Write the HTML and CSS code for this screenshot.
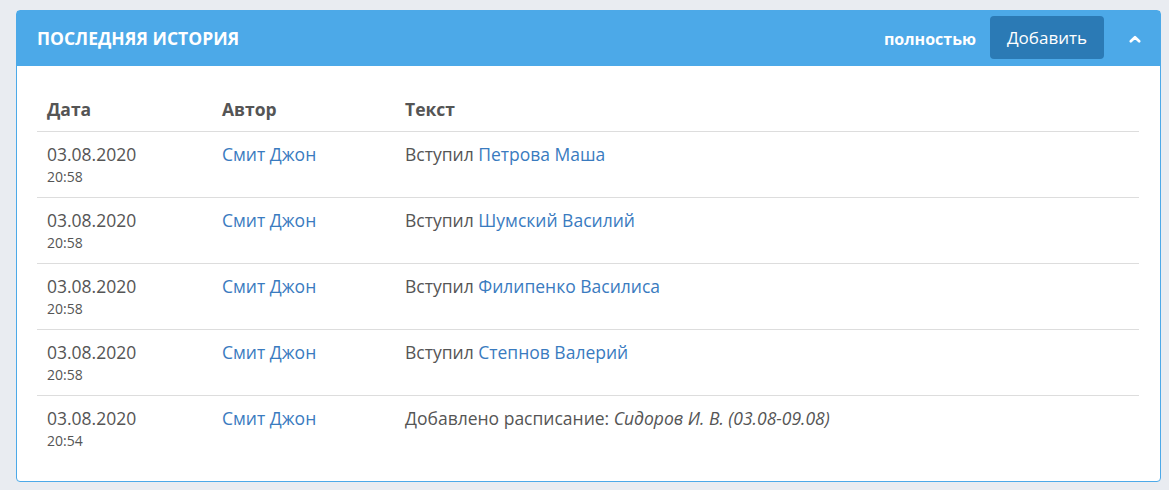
FILE: index.html
```html
<!DOCTYPE html>
<html lang="ru">
<head>
    <meta charset="UTF-8">
    <title>Последняя история</title>
    <link rel="stylesheet" href="styles.css">
</head>
<body>
    <div class="panel">
        <div class="panel-heading">
            <h2 class="panel-title">Последняя история</h2>
            <div class="panel-tools">
                <a href="#" class="full-link">полностью</a>
                <button class="btn-add">Добавить</button>
                <a href="#" class="collapse">
                    <svg width="12" height="8" viewBox="0 0 12 8"><path d="M1.8 6.3 L6 2.2 L10.2 6.3" fill="none" stroke="#fff" stroke-width="2.6" stroke-linecap="round" stroke-linejoin="round"/></svg>
                </a>
            </div>
        </div>
        <div class="panel-body">
            <table class="history">
                <thead>
                    <tr>
                        <th class="col-date">Дата</th>
                        <th class="col-author">Автор</th>
                        <th>Текст</th>
                    </tr>
                </thead>
                <tbody>
                    <tr>
                        <td>03.08.2020<div class="time">20:58</div></td>
                        <td><a href="#">Смит Джон</a></td>
                        <td>Вступил <a href="#">Петрова Маша</a></td>
                    </tr>
                    <tr>
                        <td>03.08.2020<div class="time">20:58</div></td>
                        <td><a href="#">Смит Джон</a></td>
                        <td>Вступил <a href="#">Шумский Василий</a></td>
                    </tr>
                    <tr>
                        <td>03.08.2020<div class="time">20:58</div></td>
                        <td><a href="#">Смит Джон</a></td>
                        <td>Вступил <a href="#">Филипенко Василиса</a></td>
                    </tr>
                    <tr>
                        <td>03.08.2020<div class="time">20:58</div></td>
                        <td><a href="#">Смит Джон</a></td>
                        <td>Вступил <a href="#">Степнов Валерий</a></td>
                    </tr>
                    <tr>
                        <td>03.08.2020<div class="time">20:54</div></td>
                        <td><a href="#">Смит Джон</a></td>
                        <td>Добавлено расписание: <em>Сидоров И. В. (03.08-09.08)</em></td>
                    </tr>
                </tbody>
            </table>
        </div>
    </div>
</body>
</html>
```

FILE: styles.css
```css
body {
    margin: 0;
    padding: 10px 8px 8px 16px;
    background-color: #e9ecf1;
    font-family: "Open Sans", sans-serif;
    color: #555;
}
.panel {
    background: white;
    border: 1px solid #4ca9e8;
    border-radius: 4px;
}
.panel-heading {
    display: flex;
    align-items: center;
    justify-content: space-between;
    height: 55px;
    padding: 0 19px 0 20px;
    background-color: #4ca9e8;
}
.panel-title {
    margin: 0 0 1px;
    font-size: 17.5px;
    font-weight: 700;
    text-transform: uppercase;
    color: white;
}
.panel-tools {
    display: flex;
    align-items: center;
}
.full-link {
    font-size: 16px;
    font-weight: 700;
    color: white;
    text-decoration: none;
    margin-right: 14px;
}
.btn-add {
    height: 43px;
    margin-bottom: 2px;
    padding: 0 17px;
    border: none;
    border-radius: 4px;
    background-color: #2b7ab5;
    color: white;
    font-family: "Open Sans", sans-serif;
    font-size: 17px;
    cursor: pointer;
}
.collapse {
    display: flex;
    margin-left: 25px;
}
.panel-body {
    padding: 21px 21px 20px 20px;
}
.history {
    width: 100%;
    border-collapse: collapse;
    font-size: 17.5px;
}
.history th {
    text-align: left;
    font-weight: 700;
    padding: 10px;
    line-height: 24px;
}
.history td {
    vertical-align: top;
    padding: 10px;
    line-height: 24px;
    border-top: 1px solid #dddddd;
}
.col-date {
    width: 155px;
}
.col-author {
    width: 163px;
}
.time {
    font-size: 14px;
    line-height: 21px;
}
.history a {
    color: #3a7bbf;
    text-decoration: none;
}
```
